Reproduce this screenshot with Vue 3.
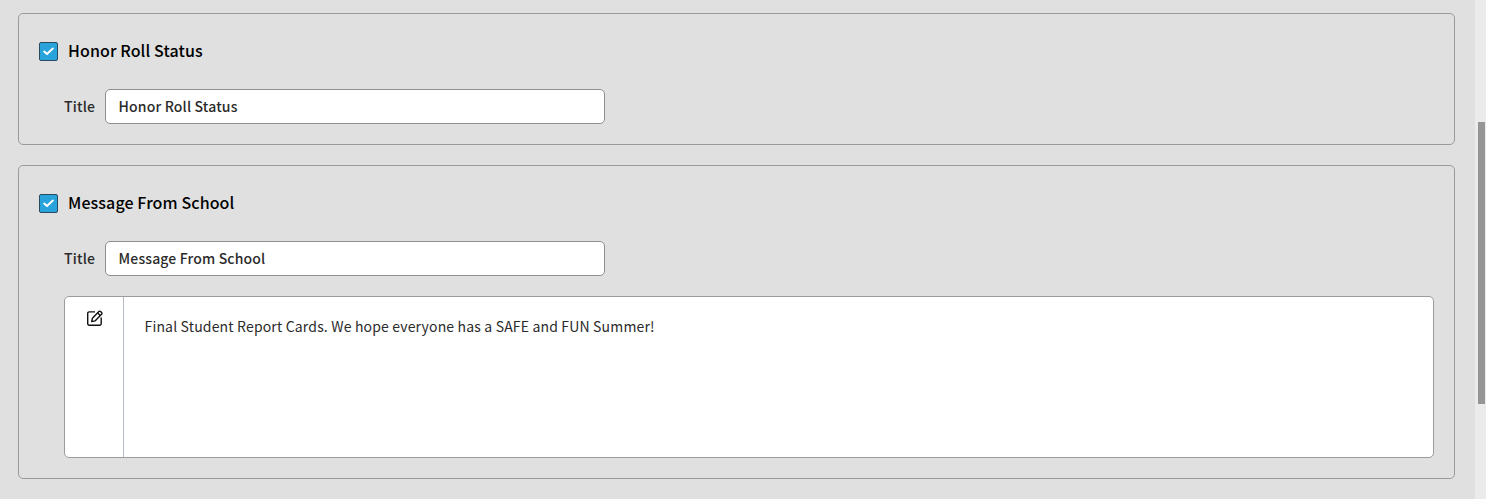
<template>
  <div class="page">
    <main class="content">
      <section v-for="section in sections" :key="section.title" class="card">
        <div class="card-head">
          <span class="checkbox">
            <svg width="11" height="9" viewBox="0 0 11 9" fill="none">
              <path d="M1.2 4.6 L4 7.1 L9.8 1.6" stroke="#fff" stroke-width="2" stroke-linecap="round" stroke-linejoin="round" />
            </svg>
          </span>
          <h3 class="card-title">{{ section.title }}</h3>
        </div>
        <div class="field">
          <label class="field-label">Title</label>
          <input class="field-input" type="text" :value="section.title" />
        </div>
        <div v-if="section.message" class="editor">
          <div class="editor-tools">
            <svg width="16" height="16" viewBox="0 0 16 16" fill="none" stroke="#111" stroke-width="1.4" stroke-linejoin="round">
              <path d="M8 1.9 H2.2 A1.5 1.5 0 0 0 0.7 3.4 V13.8 A1.5 1.5 0 0 0 2.2 15.3 H12.7 A1.5 1.5 0 0 0 14.2 13.8 V7.6" />
              <path d="M5.4 8.3 L11.9 1.6 A1.1 1.1 0 0 1 13.5 1.5 L14.6 2.6 A1.1 1.1 0 0 1 14.6 4.2 L8 10.9 L4.7 11.6 Z" />
              <path d="M10.7 2.9 L13.3 5.5" />
            </svg>
          </div>
          <div class="editor-body">{{ section.message }}</div>
        </div>
      </section>
    </main>
    <div class="scrollbar">
      <div class="scrollbar-thumb"></div>
    </div>
  </div>
</template>

<script setup>
const sections = [
  { title: 'Honor Roll Status' },
  {
    title: 'Message From School',
    message: 'Final Student Report Cards. We hope everyone has a SAFE and FUN Summer!'
  }
];
</script>

<style scoped>
.page {
  display: flex;
  height: 499px;
  overflow: hidden;
  background: #e0e0e0;
  font-family: "Noto Sans CJK JP", "Noto Sans", sans-serif;
  color: #2b2b2b;
}

.content {
  flex: 1;
  display: flex;
  flex-direction: column;
  gap: 20px;
  padding: 13px 20px 0 18px;
  min-width: 0;
}

.card {
  border: 1px solid #9b9b9b;
  border-radius: 5px;
  padding: 20px 20px 20px 45px;
}

.card-head {
  display: flex;
  align-items: center;
  height: 36px;
  margin-left: -25px;
}

.checkbox {
  display: flex;
  align-items: center;
  justify-content: center;
  width: 19px;
  height: 19px;
  margin-bottom: 1px;
  box-sizing: border-box;
  background: #29a3db;
  border: 1px solid #2a4a60;
  border-radius: 2px;
}

.card-title {
  margin: 0 0 0 10px;
  padding-bottom: 5px;
  font-size: 16px;
  font-weight: 500;
  letter-spacing: 0.1px;
  color: #000;
}

.field {
  display: flex;
  align-items: center;
  gap: 10px;
  margin-top: 19px;
}

.field-label {
  padding-bottom: 2px;
  font-size: 14px;
  font-weight: 500;
  letter-spacing: 0.17px;
}

.field-input {
  width: 500px;
  height: 35px;
  box-sizing: border-box;
  padding: 0 12.5px 2px;
  border: 1px solid #8f8f8f;
  border-radius: 5px;
  background: #fff;
  font: 500 14px "Noto Sans CJK JP", "Noto Sans", sans-serif;
  letter-spacing: 0.15px;
  color: #2b2b2b;
  outline: none;
}

.editor {
  display: flex;
  height: 162px;
  margin-top: 20px;
  box-sizing: border-box;
  border: 1px solid #9b9b9b;
  border-radius: 5px;
  background: #fff;
}

.editor-tools {
  width: 59px;
  flex-shrink: 0;
  padding: 13px 0 0 22px;
  box-sizing: border-box;
  border-right: 1px solid #b5bcc4;
}

.editor-tools svg {
  display: block;
}

.editor-body {
  padding: 18px 20px 18px 20.5px;
  font-size: 14px;
  line-height: 22px;
  letter-spacing: 0.165px;
}

.scrollbar {
  width: 11px;
  flex-shrink: 0;
  background: #ebebeb;
  padding-top: 122px;
  box-sizing: border-box;
}

.scrollbar-thumb {
  width: 7px;
  height: 282px;
  margin-left: 3px;
  background: #959595;
}
</style>

<style>
body {
  margin: 0;
}
</style>
